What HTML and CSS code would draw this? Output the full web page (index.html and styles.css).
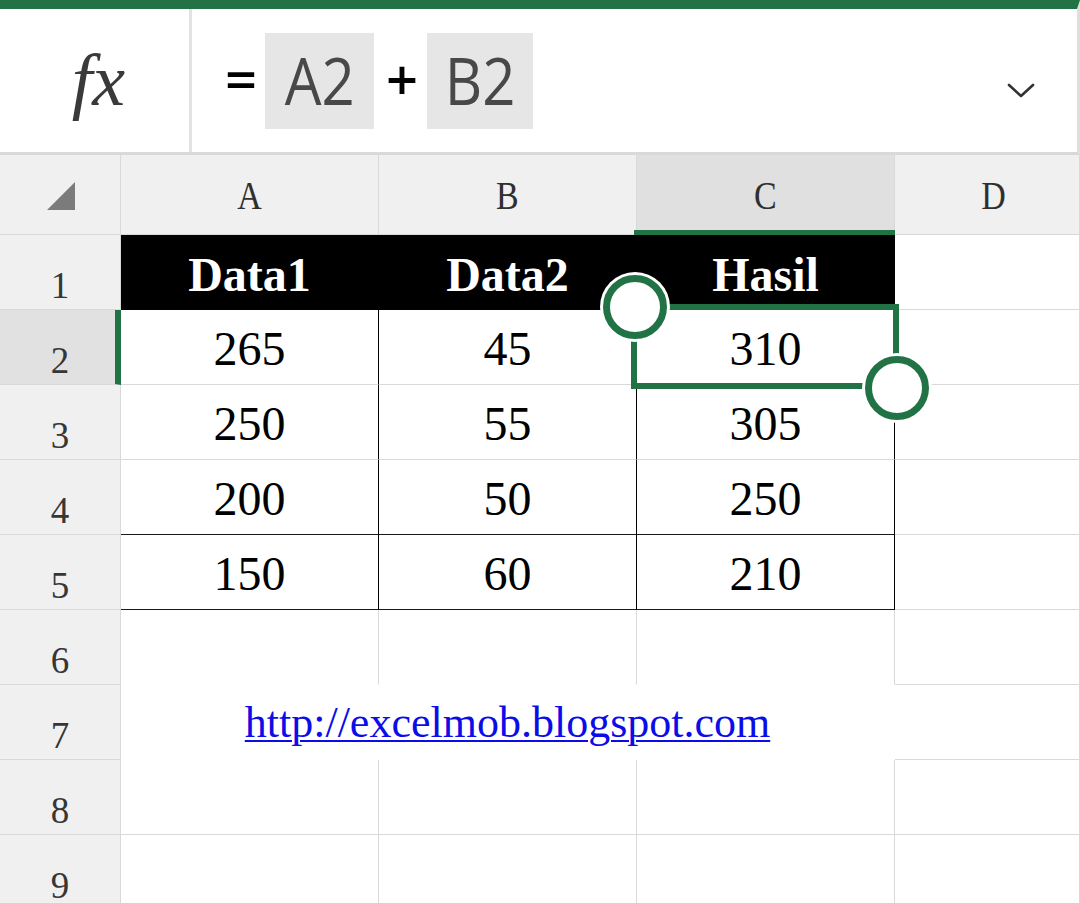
FILE: index.html
```html
<!DOCTYPE html>
<html lang="id">
<head>
<meta charset="utf-8">
<title>Excel - Rumus Penjumlahan</title>
<link rel="stylesheet" href="styles.css">
</head>
<body>
<div class="app">
  <div class="formula-bar">
    <div class="fx-cell"><span class="fx">fx</span></div>
    <div class="formula">
      <span class="op">=</span>
      <span class="ref ref-a"><span class="ref-txt">A2</span></span>
      <span class="op op-plus">+</span>
      <span class="ref ref-b"><span class="ref-txt">B2</span></span>
    </div>
    <div class="chev">
      <svg width="28" height="16" viewBox="0 0 28 16"><polyline points="2,2 14,13 26,2" fill="none" stroke="#333" stroke-width="2.6" stroke-linecap="round" stroke-linejoin="round"/></svg>
    </div>
  </div>

  <div class="sheet">
    <div class="cell corner"><svg width="28" height="28" viewBox="0 0 28 28"><polygon points="28,0 28,28 0,28" fill="#7b7b7b"/></svg></div>
    <div class="cell ch"><span class="lbl">A</span></div>
    <div class="cell ch"><span class="lbl">B</span></div>
    <div class="cell ch ch-sel"><span class="lbl">C</span></div>
    <div class="cell ch ch-d"><span class="lbl">D</span></div>

    <div class="cell rh">1</div>
    <div class="cell hd">Data1</div>
    <div class="cell hd">Data2</div>
    <div class="cell hd">Hasil</div>
    <div class="cell"></div>

    <div class="cell rh rh-sel">2</div>
    <div class="cell num">265</div>
    <div class="cell num">45</div>
    <div class="cell num">310</div>
    <div class="cell"></div>

    <div class="cell rh">3</div>
    <div class="cell num">250</div>
    <div class="cell num">55</div>
    <div class="cell num">305</div>
    <div class="cell"></div>

    <div class="cell rh">4</div>
    <div class="cell num num-dark">200</div>
    <div class="cell num num-dark">50</div>
    <div class="cell num num-dark">250</div>
    <div class="cell"></div>

    <div class="cell rh">5</div>
    <div class="cell num num-dark">150</div>
    <div class="cell num num-dark">60</div>
    <div class="cell num num-dark">210</div>
    <div class="cell"></div>

    <div class="cell rh">6</div>
    <div class="cell open-bottom"></div>
    <div class="cell open-bottom"></div>
    <div class="cell open-bottom"></div>
    <div class="cell"></div>

    <div class="cell rh">7</div>
    <div class="cell link-cell"><a class="link" href="#">http://excelmob.blogspot.com</a></div>
    <div class="cell"></div>

    <div class="cell rh">8</div>
    <div class="cell"></div>
    <div class="cell"></div>
    <div class="cell"></div>
    <div class="cell"></div>

    <div class="cell rh">9</div>
    <div class="cell"></div>
    <div class="cell"></div>
    <div class="cell"></div>
    <div class="cell"></div>

    <div class="selection"></div>
    <div class="handle handle-tl"></div>
    <div class="handle handle-br"></div>
  </div>
</div>
</body>
</html>
```

FILE: styles.css
```css
html, body {
  margin: 0;
  padding: 0;
  background: #fff;
}
body {
  width: 1080px;
  height: 903px;
  overflow: hidden;
  font-family: "Liberation Serif", "Times New Roman", serif;
}
.app {
  width: 1080px;
}

/* ---------- formula bar ---------- */
.formula-bar {
  display: flex;
  height: 155px;
  box-sizing: border-box;
  border-top: 9px solid #217346;
  border-bottom: 3px solid #d9d9d9;
  border-right: 3px solid #dedede;
  background: #fff;
}
.fx-cell {
  width: 192px;
  box-sizing: border-box;
  border-right: 3px solid #e2e2e2;
  display: flex;
  align-items: center;
  justify-content: center;
  padding-left: 8px;
  padding-bottom: 2px;
}
.fx {
  font-family: "Liberation Serif", "DejaVu Serif", serif;
  font-style: italic;
  font-size: 74px;
  line-height: 1;
  color: #3a3a3a;
}
.formula {
  flex: 1;
  display: flex;
  align-items: center;
  padding-left: 33px;
  font-family: "Open Sans", "Noto Sans", sans-serif;
}
.op {
  width: 28px;
  text-align: center;
  font-size: 56px;
  line-height: 1;
  color: #000;
  font-weight: 600;
  margin-right: 12px;
  padding-bottom: 6px;
}
.op-plus {
  margin-right: 13px;
}
.ref {
  height: 96px;
  background: #e6e6e6;
  display: flex;
  align-items: center;
  justify-content: center;
  margin-right: 12px;
}
.ref-a { width: 109px; }
.ref-b { width: 106px; }
.ref-txt {
  display: inline-block;
  font-size: 66px;
  font-weight: 500;
  line-height: 1;
  color: #484848;
  transform: scaleX(0.88);
  padding-bottom: 4px;
}
.chev {
  width: 60px;
  display: flex;
  align-items: center;
  padding-top: 20px;
  margin-right: 10px;
}

/* ---------- sheet grid ---------- */
.sheet {
  position: relative;
  display: grid;
  grid-template-columns: 121px 258px 258px 258px 185px;
  grid-template-rows: 80px repeat(9, 75px);
}
.cell {
  box-sizing: border-box;
  border-right: 1px solid #d9d9d9;
  border-bottom: 1px solid #d9d9d9;
  display: flex;
  justify-content: center;
  align-items: flex-end;
}
.corner {
  background: #f0f0f0;
  justify-content: flex-start;
  align-items: flex-start;
  padding-left: 47px;
  padding-top: 27px;
}
.ch {
  position: relative;
  background: #f0f0f0;
  padding-bottom: 18px;
  font-size: 40px;
  line-height: 1;
  color: #2f2f2f;
}
.ch-d {
  padding-left: 12px;
}
.lbl {
  display: inline-block;
  transform: scaleX(0.85);
}
.ch-sel {
  background: #e0e0e0;
}
.ch-sel::after {
  content: "";
  position: absolute;
  left: -3px;
  right: -3px;
  bottom: -1px;
  height: 5px;
  background: #217346;
}
.rh {
  background: #f0f0f0;
  font-size: 37px;
  line-height: 1;
  color: #363636;
  padding-bottom: 5px;
}
.rh-sel {
  background: #e1e1e1;
  border-right: 6px solid #217346;
  padding-left: 5px;
}
.hd {
  background: #000;
  color: #fff;
  font-weight: bold;
  font-size: 48px;
  line-height: 1;
  padding-bottom: 10px;
  border-right-color: #000;
  border-bottom-color: #000;
}
.num {
  font-size: 48px;
  line-height: 1;
  color: #000;
  padding-bottom: 11px;
  border-right-color: #000;
}
.num-dark {
  border-bottom-color: #1a1a1a;
}
.open-bottom {
  border-bottom-color: transparent;
}
.link-cell {
  grid-column: span 3;
  border-right-color: transparent;
  border-bottom-color: transparent;
  padding-bottom: 14px;
}
.link {
  font-family: "Liberation Serif", serif;
  font-size: 44px;
  line-height: 1;
  color: #0c0ce8;
  text-decoration: underline;
  text-decoration-thickness: 2px;
  text-underline-offset: 3px;
}

/* ---------- selection overlay ---------- */
.selection {
  position: absolute;
  left: 631px;
  top: 149px;
  width: 268px;
  height: 85px;
  box-sizing: border-box;
  border: 6px solid #217346;
}
.handle {
  position: absolute;
  width: 64px;
  height: 64px;
  box-sizing: border-box;
  border: 7px solid #217346;
  border-radius: 50%;
  background: #fff;
  box-shadow: 0 0 0 3px #fff;
}
.handle-tl {
  left: 603px;
  top: 120px;
}
.handle-br {
  left: 865px;
  top: 201px;
}
```
